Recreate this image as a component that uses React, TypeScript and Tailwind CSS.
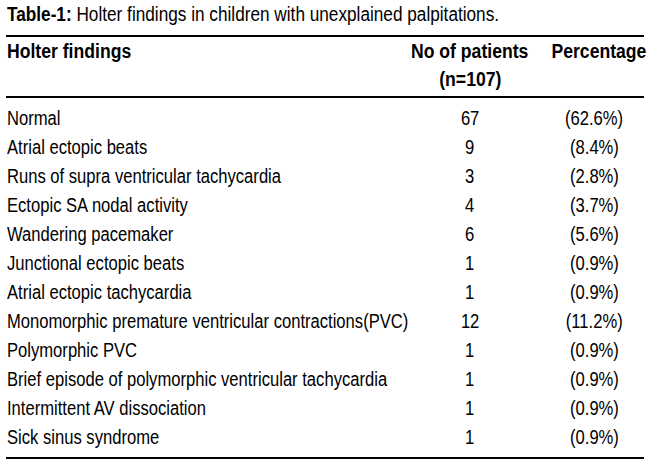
const rows: [string, string, string][] = [
  ['Normal', '67', '(62.6%)'],
  ['Atrial ectopic beats', '9', '(8.4%)'],
  ['Runs of supra ventricular tachycardia', '3', '(2.8%)'],
  ['Ectopic SA nodal activity', '4', '(3.7%)'],
  ['Wandering pacemaker', '6', '(5.6%)'],
  ['Junctional ectopic beats', '1', '(0.9%)'],
  ['Atrial ectopic tachycardia', '1', '(0.9%)'],
  ['Monomorphic premature ventricular contractions(PVC)', '12', '(11.2%)'],
  ['Polymorphic PVC', '1', '(0.9%)'],
  ['Brief episode of polymorphic ventricular tachycardia', '1', '(0.9%)'],
  ['Intermittent AV dissociation', '1', '(0.9%)'],
  ['Sick sinus syndrome', '1', '(0.9%)'],
];

// the source uses a condensed face; no narrow font is installed, so squeeze Liberation Sans
function Left({ children, bold }: { children: React.ReactNode; bold?: boolean }) {
  return (
    <span className={`inline-block whitespace-nowrap origin-left ${bold ? 'scale-x-[0.88]' : 'scale-x-[0.83]'}`}>
      {children}
    </span>
  );
}

function Mid({ children, bold }: { children: React.ReactNode; bold?: boolean }) {
  return (
    <span className={`inline-block whitespace-nowrap origin-center ${bold ? 'scale-x-[0.88]' : 'scale-x-[0.83]'}`}>
      {children}
    </span>
  );
}

export default function App() {
  return (
    <div className="w-[650px] h-[469px] bg-white text-black font-['Liberation_Sans',Arial,sans-serif] text-[20px]">
      <div className="pl-[7px] pr-[6px]">
        {/* Caption */}
        <p className="leading-[28px]">
          <span className="inline-block whitespace-nowrap origin-left scale-x-[0.86]">
            <span className="font-bold">Table-1:</span> Holter findings in children with unexplained palpitations.
          </span>
        </p>

        {/* Table */}
        <div className="mt-[7px] -ml-[1px] border-t-2 border-b-2 border-black">
          <div className="grid grid-cols-[389px_150px_98px] font-bold leading-[28px] pb-[3px] border-b-2 border-black">
            <div className="pl-[1px]">
              <Left bold>Holter findings</Left>
            </div>
            <div className="flex flex-col items-center">
              <Mid bold>No of patients</Mid>
              <Mid bold>(n=107)</Mid>
            </div>
            <div className="text-center">
              <Mid bold>Percentage</Mid>
            </div>
          </div>

          <div className="pt-[6px] pb-[5px]">
            {rows.map(([label, count, pct]) => (
              <div key={label} className="grid grid-cols-[389px_150px_98px] leading-[29px]">
                <div className="pl-[1px]">
                  <Left>{label}</Left>
                </div>
                <div className="text-center">
                  <Mid>{count}</Mid>
                </div>
                <div className="text-center">
                  <Mid>{pct}</Mid>
                </div>
              </div>
            ))}
          </div>
        </div>
      </div>
    </div>
  );
}
